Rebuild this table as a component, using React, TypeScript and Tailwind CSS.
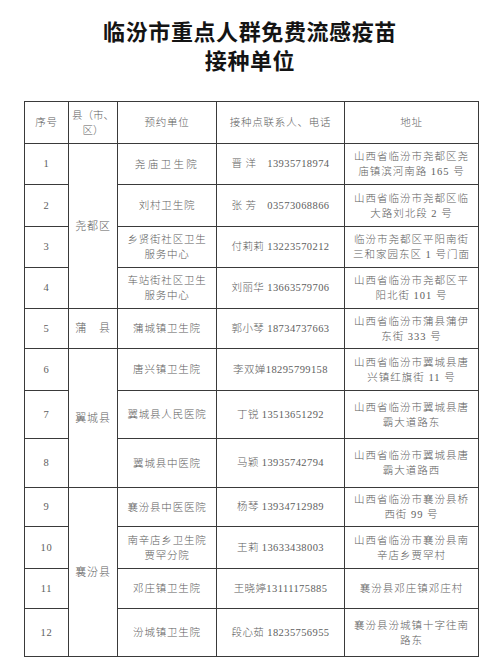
import { FC } from 'react'

type Row = {
  no: number
  county?: { name: string; span: number }
  unit: string[]
  contact: string
  address: string[]
  height: string
  unitClass?: string
}

const rows: Row[] = [
  {
    no: 1,
    county: { name: '尧都区', span: 4 },
    unit: ['尧庙卫生院'],
    unitClass: 'tracking-[2.4px]',
    contact: '晋 洋　13935718974',
    address: ['山西省临汾市尧都区尧', '庙镇滨河南路 165 号'],
    height: 'h-[41px]',
  },
  {
    no: 2,
    unit: ['刘村卫生院'],
    contact: '张 芳　03573068866',
    address: ['山西省临汾市尧都区临', '大路刘北段 2 号'],
    height: 'h-[42px]',
  },
  {
    no: 3,
    unit: ['乡贤街社区卫生', '服务中心'],
    contact: '付莉莉 13223570212',
    address: ['临汾市尧都区平阳南街', '三和家园东区 1 号门面'],
    height: 'h-[41px]',
  },
  {
    no: 4,
    unit: ['车站街社区卫生', '服务中心'],
    contact: '刘丽华 13663579706',
    address: ['山西省临汾市尧都区平', '阳北街 101 号'],
    height: 'h-[41px]',
  },
  {
    no: 5,
    county: { name: '蒲　县', span: 1 },
    unit: ['蒲城镇卫生院'],
    contact: '郭小琴 18734737663',
    address: ['山西省临汾市蒲县蒲伊', '东街 333 号'],
    height: 'h-[40px]',
  },
  {
    no: 6,
    county: { name: '翼城县', span: 3 },
    unit: ['唐兴镇卫生院'],
    contact: '李双婵18295799158',
    address: ['山西省临汾市翼城县唐', '兴镇红旗街 11 号'],
    height: 'h-[42px]',
  },
  {
    no: 7,
    unit: ['翼城县人民医院'],
    contact: '丁锐 13513651292',
    address: ['山西省临汾市翼城县唐', '霸大道路东'],
    height: 'h-[48px]',
  },
  {
    no: 8,
    unit: ['翼城县中医院'],
    contact: '马颖 13935742794',
    address: ['山西省临汾市翼城县唐', '霸大道路西'],
    height: 'h-[49px]',
  },
  {
    no: 9,
    county: { name: '襄汾县', span: 4 },
    unit: ['襄汾县中医医院'],
    contact: '杨琴 13934712989',
    address: ['山西省临汾市襄汾县桥', '西街 99 号'],
    height: 'h-[39px]',
  },
  {
    no: 10,
    unit: ['南辛店乡卫生院', '贾罕分院'],
    contact: '王莉 13633438003',
    address: ['山西省临汾市襄汾县南', '辛店乡贾罕村'],
    height: 'h-[42px]',
  },
  {
    no: 11,
    unit: ['邓庄镇卫生院'],
    contact: '王晓婷13111175885',
    address: ['襄汾县邓庄镇邓庄村'],
    height: 'h-[40px]',
  },
  {
    no: 12,
    unit: ['汾城镇卫生院'],
    contact: '段心茹 18235756955',
    address: ['襄汾县汾城镇十字往南', '路东'],
    height: 'h-[48px]',
  },
]

const cell = 'border border-[#3a3a3a] text-center align-middle p-0'

const Lines: FC<{ lines: string[]; className?: string }> = ({ lines, className }) => (
  <div className={`leading-[15px] ${className ?? ''}`}>
    {lines.map((l) => (
      <div key={l}>{l}</div>
    ))}
  </div>
)

const App: FC = () => {
  return (
    <div
      className="w-[500px] h-[658px] bg-white overflow-hidden"
      style={{ fontFamily: '"Liberation Serif", "Noto Sans CJK SC", serif' }}
    >
      <header
        className="pt-[16px] text-center text-[22px] leading-[29px] font-bold text-[#141414] tracking-[0.6px]"
        style={{ fontFamily: '"Noto Sans CJK SC", sans-serif' }}
      >
        <div>临汾市重点人群免费流感疫苗</div>
        <div>接种单位</div>
      </header>

      <table className="mt-[27px] ml-[24px] w-[454px] table-fixed border-collapse text-[10.5px] font-light text-[#5e5e5e] tracking-[0.8px]">
        <colgroup>
          <col className="w-[44px]" />
          <col className="w-[49px]" />
          <col className="w-[99px]" />
          <col className="w-[128px]" />
          <col className="w-[134px]" />
        </colgroup>
        <thead>
          <tr className="h-[42px]">
            <th className={`${cell} font-light`}>序号</th>
            <th className={`${cell} font-light`}>
              <Lines lines={['县（市、', '区）']} className="tracking-normal" />
            </th>
            <th className={`${cell} font-light`}>预约单位</th>
            <th className={`${cell} font-light`}>接种点联系人、电话</th>
            <th className={`${cell} font-light`}>地址</th>
          </tr>
        </thead>
        <tbody>
          {rows.map((r) => (
            <tr key={r.no} className={r.height}>
              <td className={cell}>{r.no}</td>
              {r.county && (
                <td className={`${cell} text-[11px]`} rowSpan={r.county.span}>
                  {r.county.name}
                </td>
              )}
              <td className={cell}>
                <Lines lines={r.unit} className={r.unitClass} />
              </td>
              <td className={`${cell} whitespace-pre tracking-[0.4px]`}>{r.contact}</td>
              <td className={cell}>
                <Lines lines={r.address} className="tracking-[1px]" />
              </td>
            </tr>
          ))}
        </tbody>
      </table>
    </div>
  )
}

export default App
